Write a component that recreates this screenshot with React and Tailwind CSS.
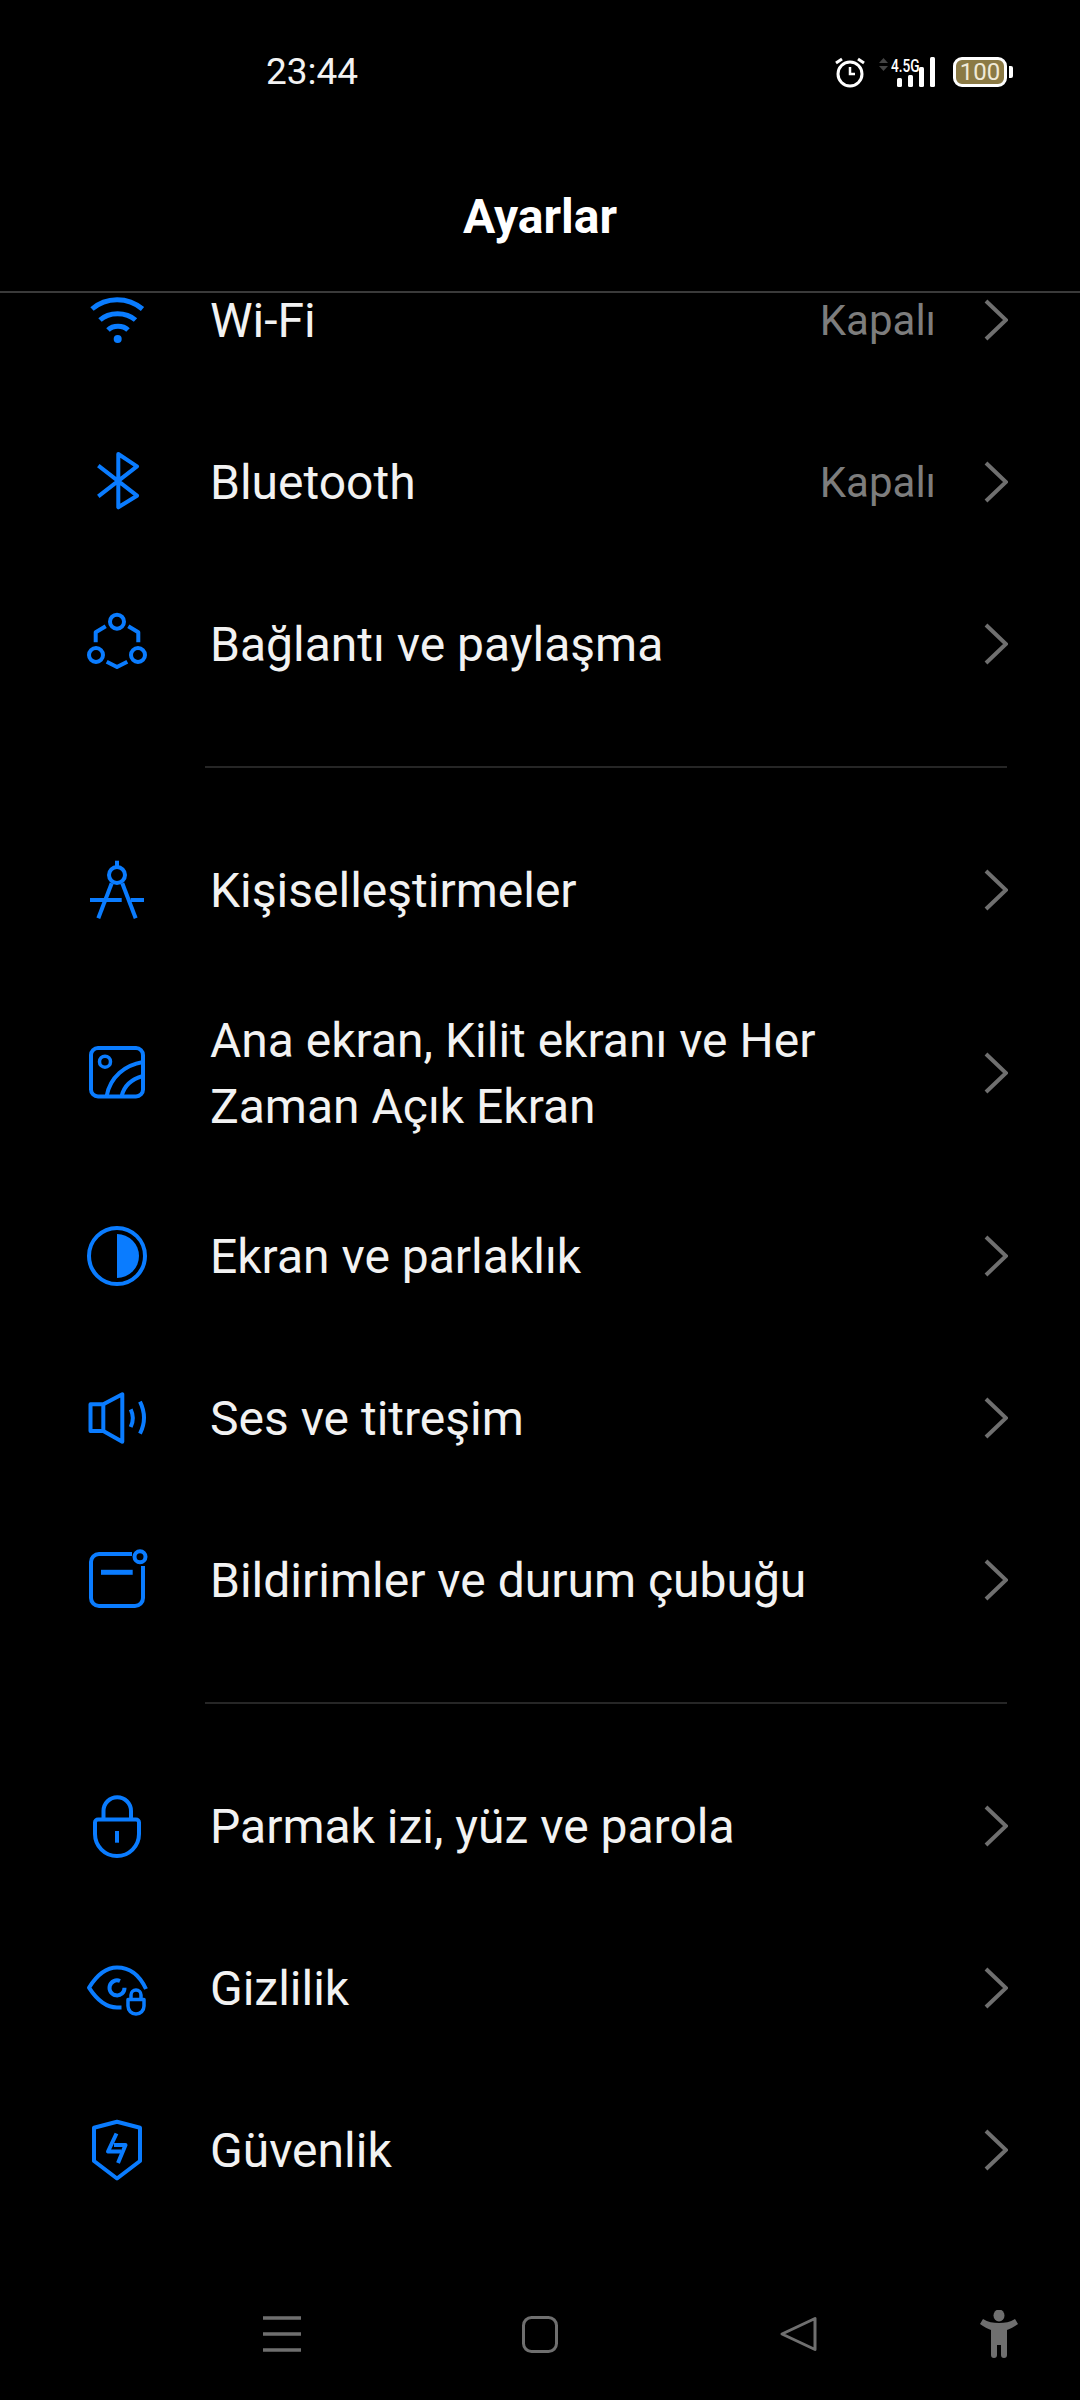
const Icon = ({ children }) => (
  <svg width="64" height="64" viewBox="0 0 64 64" fill="none" stroke="#0a7cff" strokeWidth="4" strokeLinecap="butt" strokeLinejoin="round" className="shrink-0">
    {children}
  </svg>
);

const WifiIcon = () => (
  <Icon>
    <path d="M7 21C21 8.500 43 8.500 57.500 21" strokeWidth="5" />
    <path d="M15 32C24 23.500 41 23.500 50.500 32" strokeWidth="5" />
    <path d="M23 42C28 37 38 37 43 42" strokeWidth="5" />
    <circle cx="32.700" cy="51" r="4" fill="#0a7cff" stroke="none" />
  </Icon>
);

const BluetoothIcon = () => (
  <Icon>
    <path d="M13.300 15.700L52 45.700L33.300 57.300V4L52 16.300L13.300 46.300" />
  </Icon>
);

const ConnectIcon = () => (
  <Icon>
    <circle cx="32" cy="9.700" r="7" />
    <circle cx="11" cy="43" r="7" />
    <circle cx="53" cy="43" r="7" />
    <path d="M20.700 14.300L10.700 20.300V30.300" />
    <path d="M43.300 14.300L53.300 20.300V30.300" />
    <path d="M21.700 49.700L32 55L42.300 49.700" />
  </Icon>
);

const CompassIcon = () => (
  <Icon>
    <circle cx="32" cy="17" r="8" />
    <path d="M32 2.700V8.700" />
    <path d="M26.700 25.300L13.300 60.300" />
    <path d="M37.300 25.300L50.700 60.300" />
    <path d="M5 42H36.700" />
    <path d="M45.700 42H59" />
  </Icon>
);

const WallpaperIcon = () => (
  <Icon>
    <rect x="6" y="7" width="52" height="48.500" rx="7" />
    <circle cx="20" cy="20.700" r="5.500" strokeWidth="3.500" />
    <path d="M21.700 55C25 36 40 24 58 21" />
    <path d="M36.700 55C39 45 47 38 58 35" />
  </Icon>
);

const ContrastIcon = () => (
  <Icon>
    <circle cx="32" cy="32" r="28" />
    <path d="M32 10A22 22 0 0 1 32 54Z" fill="#0a7cff" stroke="none" />
  </Icon>
);

const SoundIcon = () => (
  <Icon>
    <path d="M18.300 18.300L37.300 8.300V55.700L18.300 45H5.500V18.300Z" />
    <path d="M18.300 18.300V45" />
    <path d="M45.700 23.300Q50 32 45.700 41" />
    <path d="M55 15.700Q63 32 55 47.700" />
  </Icon>
);

const NoticeIcon = () => (
  <Icon>
    <path d="M47 6H14A8 8 0 0 0 6 14V50A8 8 0 0 0 14 58H50A8 8 0 0 0 58 50V18" />
    <circle cx="55" cy="8.700" r="5.500" />
    <path d="M16 24.300H47.700" strokeWidth="5" />
  </Icon>
);

const LockIcon = () => (
  <Icon>
    <path d="M13 25.500H51A3 3 0 0 1 54 28.500V40A22 22 0 0 1 10 40V28.500A3 3 0 0 1 13 25.500Z" />
    <path d="M18.500 25V17A13.700 13.700 0 0 1 46 17V25" />
    <path d="M32 37V48.700" />
  </Icon>
);

const PrivacyIcon = () => (
  <Icon>
    <path d="M61 33C55 20 45 11.500 32 11.500C20 11.500 10 22 4 31.700C10 41 20 51.500 32 51.500H36.500" />
    <path d="M35 25A7.500 7.500 0 1 0 39.500 31.700" />
    <path d="M43 43.500H59V50A8 8 0 0 1 43 50Z" strokeWidth="3.500" />
    <path d="M46 43V39A5 5 0 0 1 56 39V43" strokeWidth="3.500" />
  </Icon>
);

const ShieldIcon = () => (
  <Icon>
    <path d="M32 3.700L55 9.700V43L32 60.500L9 43V9.700Z" />
    <path d="M31.500 15.500L23 33.500H36" />
    <path d="M29 27H40.500L33 45" />
  </Icon>
);

const Chevron = () => (
  <svg width="24" height="42" viewBox="0 0 24 42" fill="none" stroke="#6f6f6f" strokeWidth="4" className="shrink-0">
    <path d="M2 2L22 21L2 40" />
  </svg>
);

const AlarmIcon = () => (
  <svg width="30" height="32" viewBox="0 0 30 32" fill="none" stroke="white" strokeWidth="3">
    <circle cx="15" cy="18" r="12" />
    <path d="M15 11V18H20" strokeWidth="2.500" />
    <path d="M1 7L7 3" />
    <path d="M29 7L23 3" />
  </svg>
);

function Row({ icon, label, value, wrapped }) {
  return (
    <div className="flex items-center pl-[85px] pr-[72px] min-h-[162px] py-[35px]">
      {icon}
      <span className={`flex-1 ml-[61px] pt-[2px] text-[48px] text-[#f2f2f2] pr-[100px] ${wrapped ? "leading-[66px]" : "leading-[50px]"}`}>{label}</span>
      {value && <span className="text-[42px] text-[#7d7d7d] mr-[48px]">{value}</span>}
      <Chevron />
    </div>
  );
}

const Divider = () => <div className="h-[2px] bg-[#262626] ml-[205px] mr-[73px] my-[41px]" />;

export default function App() {
  return (
    <div className="w-[1080px] h-[2400px] bg-black flex flex-col overflow-hidden font-['Roboto',sans-serif]">
      {/* barra de estado */}
      <div className="h-[144px] pl-[266px] pr-[67px] flex items-center justify-between shrink-0">
        <span className="text-[37px] text-[#f2f2f2]">23:44</span>
        <div className="flex items-center">
          <AlarmIcon />
          <div className="relative w-[57px] h-[30px] ml-[14px]">
            <svg className="absolute left-0 top-0" width="57" height="30" viewBox="0 0 57 30" fill="white">
              <path d="M0 6L4.500 1L9 6Z" fill="#444" />
              <path d="M0 9L4.500 14L9 9Z" fill="#444" />
              <rect x="18" y="21" width="5" height="9" rx="1.500" />
              <rect x="29" y="18" width="5" height="12" rx="1.500" />
              <rect x="40" y="10" width="5" height="20" rx="1.500" />
              <rect x="51" y="0" width="5" height="30" rx="1.500" />
            </svg>
            <span className="absolute left-[12px] top-[0px] text-[19px] leading-[17px] font-medium text-white scale-x-[0.72] origin-left">4.5G</span>
          </div>
          <div className="ml-[17px] w-[54px] h-[30px] rounded-[9px] border-[3px] border-white bg-[#8b7a45] flex items-center justify-center text-[24px] leading-none text-[#f0ead8]">100</div>
          <div className="ml-[2px] w-[4px] h-[12px] rounded-r-[2px] bg-white" />
        </div>
      </div>

      {/* titulo */}
      <div className="h-[149px] pb-[2px] flex items-center justify-center border-b-2 border-[#3a3a3a] shrink-0">
        <h1 className="text-[48px] font-bold text-white">Ayarlar</h1>
      </div>

      {/* lista recortada por el scroll */}
      <div className="flex-1 overflow-hidden">
        <div className="-mt-[54px]">
          <Row icon={<WifiIcon />} label="Wi-Fi" value="Kapalı" />
          <Row icon={<BluetoothIcon />} label="Bluetooth" value="Kapalı" />
          <Row icon={<ConnectIcon />} label="Bağlantı ve paylaşma" />
          <Divider />
          <Row icon={<CompassIcon />} label="Kişiselleştirmeler" />
          <Row icon={<WallpaperIcon />} label="Ana ekran, Kilit ekranı ve Her Zaman Açık Ekran" wrapped />
          <Row icon={<ContrastIcon />} label="Ekran ve parlaklık" />
          <Row icon={<SoundIcon />} label="Ses ve titreşim" />
          <Row icon={<NoticeIcon />} label="Bildirimler ve durum çubuğu" />
          <Divider />
          <Row icon={<LockIcon />} label="Parmak izi, yüz ve parola" />
          <Row icon={<PrivacyIcon />} label="Gizlilik" />
          <Row icon={<ShieldIcon />} label="Güvenlik" />
        </div>
      </div>

      {/* navegacion */}
      <div className="h-[90px] pb-[42px] pl-[263px] flex items-center shrink-0">
        <svg width="38" height="36" viewBox="0 0 38 36" stroke="#6f6f6f" strokeWidth="3.500">
          <path d="M0 2H38M0 18H38M0 34H38" />
        </svg>
        <svg className="ml-[221px]" width="36" height="37" viewBox="0 0 36 37" fill="none" stroke="#6f6f6f" strokeWidth="3">
          <rect x="1.500" y="1.500" width="33" height="34" rx="8" />
        </svg>
        <svg className="ml-[222px]" width="37" height="36" viewBox="0 0 37 36" fill="none" stroke="#6f6f6f" strokeWidth="3" strokeLinejoin="round">
          <path d="M35 2.500V33.500L2 18Z" strokeLinejoin="round" />
        </svg>
        <svg className="ml-[163px]" width="38" height="48" viewBox="0 0 38 48" fill="#6f6f6f">
          <ellipse cx="19" cy="5.500" rx="5.500" ry="6" />
          <path d="M0 14L3 9C8 12 13 13 19 13C25 13 30 12 35 9L38 14C34 17 30 19 27 20V45A3 3 0 0 1 21 45V35H17V45A3 3 0 0 1 11 45V20C8 19 4 17 0 14Z" />
        </svg>
      </div>
    </div>
  );
}
